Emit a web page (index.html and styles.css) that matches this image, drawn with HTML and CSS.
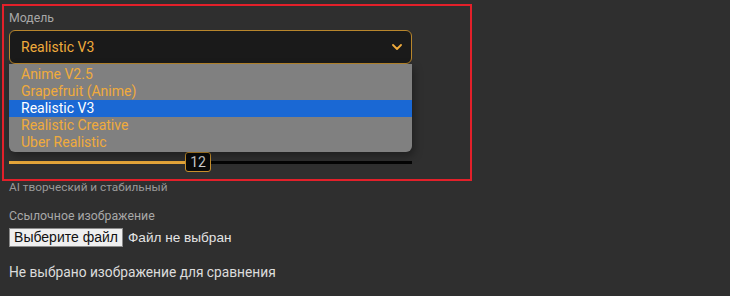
FILE: index.html
```html
<!DOCTYPE html>
<html lang="ru">
<head>
<meta charset="utf-8">
<title>Модель</title>
<link rel="stylesheet" href="styles.css">
</head>
<body>
<div class="page">
  <div class="field-label">Модель</div>
  <div class="select-wrap">
    <div class="select">
      <span class="select-value">Realistic V3</span>
      <svg class="chevron" width="10" height="6" viewBox="0 0 10 6"><path d="M1 1 L5 5 L9 1" fill="none" stroke="#f0ab3c" stroke-width="1.8" stroke-linecap="round" stroke-linejoin="round"/></svg>
    </div>
    <ul class="dropdown">
      <li class="option">Anime V2.5</li>
      <li class="option">Grapefruit (Anime)</li>
      <li class="option selected">Realistic V3</li>
      <li class="option">Realistic Creative</li>
      <li class="option">Uber Realistic</li>
    </ul>
  </div>
  <div class="slider">
    <div class="track-fill"></div>
    <div class="thumb">12</div>
    <div class="track-rest"></div>
  </div>
  <div class="hint">AI творческий и стабильный</div>
  <div class="field-label ref-label">Ссылочное изображение</div>
  <div class="file-row">
    <button class="file-btn" type="button">Выберите файл</button>
    <span class="file-name">Файл не выбран</span>
  </div>
  <div class="status">Не выбрано изображение для сравнения</div>
  <div class="highlight"></div>
</div>
</body>
</html>
```
FILE: styles.css
```css
html, body {
  margin: 0;
  padding: 0;
  background: #2f2f2f;
}
body {
  font-family: Roboto, "Liberation Sans", sans-serif;
  color: #dddddd;
  width: 730px;
  height: 296px;
  overflow: hidden;
}
.page {
  position: relative;
  padding: 10px 0 0 9px;
  width: 403px;
}
.field-label {
  font-size: 12.3px;
  line-height: 16px;
  color: #a8a8a8;
}
.select-wrap {
  position: relative;
  margin-top: 4px;
}
.select {
  box-sizing: border-box;
  height: 34px;
  border: 1px solid #b8862c;
  border-radius: 6px;
  background: #1a1a1a;
  display: flex;
  align-items: center;
  justify-content: space-between;
  padding: 0 9px 0 11px;
}
.select-value {
  font-size: 14px;
  color: #f0ab3c;
}
.chevron {
  display: block;
}
.dropdown {
  position: absolute;
  top: 34px;
  left: 0;
  right: 0;
  margin: 0;
  padding: 2px 0 1px;
  list-style: none;
  background: #808080;
  border-radius: 0 0 6px 6px;
  box-shadow: 2px 4px 8px rgba(0, 0, 0, 0.35);
  z-index: 2;
}
.option {
  font-size: 14px;
  line-height: 17px;
  padding-left: 12px;
  color: #f0ab3c;
}
.option.selected {
  background: #1a68d4;
  color: #ffffff;
}
.slider {
  margin-top: 88px;
  height: 20px;
  display: flex;
  align-items: center;
}
.track-fill {
  width: 176px;
  height: 3px;
  background: #e6a63a;
}
.track-rest {
  flex: 1;
  height: 3px;
  background: #050505;
}
.thumb {
  box-sizing: border-box;
  width: 26px;
  height: 20px;
  border: 1px solid #c8902c;
  border-radius: 3px;
  background: #0a0a0a;
  color: #cfcfcf;
  font-size: 14px;
  line-height: 18px;
  text-align: center;
}
.hint {
  margin-top: 7px;
  font-size: 11.8px;
  line-height: 16px;
  color: #999999;
}
.ref-label {
  margin-top: 13px;
}
.file-row {
  margin-top: 4px;
  display: flex;
  align-items: center;
  gap: 5px;
  height: 19px;
}
.file-btn {
  box-sizing: border-box;
  height: 19px;
  width: 114px;
  padding: 0;
  margin: 0;
  border: 1px solid #8a8a8a;
  border-radius: 0;
  background: #efefef;
  color: #111111;
  font-family: "Liberation Sans", Arial, sans-serif;
  font-size: 14px;
  line-height: 17px;
}
.file-name {
  font-family: "Liberation Sans", Arial, sans-serif;
  font-size: 13.6px;
  color: #e4e4e4;
}
.status {
  margin-top: 17px;
  font-size: 13.75px;
  line-height: 17px;
  color: #dcdcdc;
}
.highlight {
  position: absolute;
  left: 2px;
  top: 4px;
  width: 470px;
  height: 177px;
  box-sizing: border-box;
  border: 2px solid #e3202a;
  pointer-events: none;
  z-index: 3;
}
```
